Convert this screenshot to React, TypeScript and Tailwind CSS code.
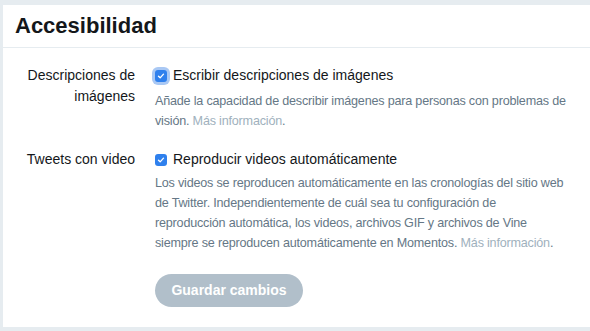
import React from "react";

function Check({ focus }: { focus?: boolean }) {
  return (
    <span
      className={
        "relative inline-flex h-[12px] w-[12px] shrink-0 items-center justify-center rounded-[3px] bg-[#2f80ed] " +
        (focus ? "ring-[3px] ring-[#a9c8f4]" : "")
      }
    >
      <svg viewBox="0 0 12 12" className="h-[10px] w-[10px]">
        <path d="M3 6.2 L5 8.2 L9 3.8" fill="none" stroke="#fff" strokeWidth="1.6" strokeLinecap="round" strokeLinejoin="round" />
      </svg>
    </span>
  );
}

export default function App() {
  return (
    <div
      className="h-[331px] w-[590px] overflow-hidden bg-[#e6ecf0] pl-[3px] pt-[5px]"
      style={{ fontFamily: '"Liberation Sans", Arial, sans-serif' }}
    >
      <div className="h-[322px] w-[620px] bg-white text-[#14171a]">
        <div className="flex h-[43px] items-center border-b border-[#e6ecf0] px-[12px]">
          <h1 className="text-[22px] font-bold leading-none">Accesibilidad</h1>
        </div>
        <div className="px-[12px] pt-[17px]">
          <div className="flex gap-[20px]">
            <div className="w-[120px] shrink-0 text-right text-[14px] leading-[21px]">Descripciones de imágenes</div>
            <div className="w-[440px]">
              <label className="flex items-center gap-[6px] text-[14px] leading-[21px]">
                <Check focus />
                <span>Escribir descripciones de imágenes</span>
              </label>
              <p className="mt-[5px] whitespace-nowrap text-[12.6px] leading-[20px] tracking-[-0.2px] text-[#657786]">
                Añade la capacidad de describir imágenes para personas con problemas de
                <br />
                visión. <span className="text-[#a0b1bd]">Más información</span>.
              </p>
            </div>
          </div>
          <div className="mt-[18px] flex gap-[20px]">
            <div className="w-[120px] shrink-0 text-right text-[14px] leading-[21px]">Tweets con video</div>
            <div className="w-[440px]">
              <label className="flex items-center gap-[6px] text-[14px] leading-[21px]">
                <Check />
                <span>Reproducir videos automáticamente</span>
              </label>
              <p className="mt-[3px] whitespace-nowrap text-[12.6px] leading-[20px] tracking-[-0.2px] text-[#657786]">
                Los videos se reproducen automáticamente en las cronologías del sitio web
                <br />
                de Twitter. Independientemente de cuál sea tu configuración de
                <br />
                reproducción automática, los videos, archivos GIF y archivos de Vine
                <br />
                siempre se reproducen automáticamente en Momentos.{" "}
                <span className="text-[#a0b1bd]">Más información</span>.
              </p>
              <button className="mt-[21px] h-[33px] w-[148px] rounded-full bg-[#b1bfca] text-[14px] font-bold text-white">
                Guardar cambios
              </button>
            </div>
          </div>
        </div>
      </div>
    </div>
  );
}
